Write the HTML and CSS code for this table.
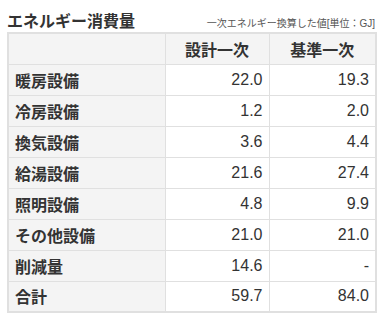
FILE: index.html
```html
<!DOCTYPE html>
<html lang="ja">
<head>
<meta charset="utf-8">
<link rel="stylesheet" href="styles.css">
</head>
<body>
<div class="panel">
  <div class="head">
    <h2 class="title">エネルギー消費量</h2>
    <span class="note">一次エネルギー換算した値[単位：GJ]</span>
  </div>
  <table class="energy">
    <colgroup><col class="c1"><col class="c2"><col class="c3"></colgroup>
    <thead>
      <tr><th></th><th>設計一次</th><th>基準一次</th></tr>
    </thead>
    <tbody>
      <tr><th>暖房設備</th><td>22.0</td><td>19.3</td></tr>
      <tr><th>冷房設備</th><td>1.2</td><td>2.0</td></tr>
      <tr><th>換気設備</th><td>3.6</td><td>4.4</td></tr>
      <tr><th>給湯設備</th><td>21.6</td><td>27.4</td></tr>
      <tr><th>照明設備</th><td>4.8</td><td>9.9</td></tr>
      <tr><th>その他設備</th><td>21.0</td><td>21.0</td></tr>
      <tr><th>削減量</th><td>14.6</td><td>-</td></tr>
      <tr><th>合計</th><td>59.7</td><td>84.0</td></tr>
    </tbody>
  </table>
</div>
</body>
</html>
```
FILE: styles.css
```css
html, body {
  margin: 0;
  padding: 0;
  background: #fff;
}
body {
  font-family: "Liberation Sans", Arial, "Noto Sans CJK JP", sans-serif;
  color: #333;
}
.panel {
  padding: 9px 8px 0 7px;
}
.head {
  display: flex;
  justify-content: space-between;
  align-items: baseline;
  height: 23px;
}
.title {
  margin: 0;
  font-size: 16px;
  font-weight: bold;
  line-height: 22px;
  color: #333;
  font-family: "Noto Sans CJK JP", sans-serif;
}
.note {
  font-size: 10px;
  color: #555;
  line-height: 14px;
  font-family: "Liberation Sans", "Noto Sans CJK JP", sans-serif;
}
.energy {
  width: 368px;
  border-collapse: collapse;
  border: 2px solid #e0e0e0;
  table-layout: fixed;
}
.c1 { width: 157px; }
.c2 { width: 104px; }
.c3 { width: 107px; }
.energy th, .energy td {
  border: 1px solid #e0e0e0;
  height: 31px;
  padding: 0 6px;
  box-sizing: border-box;
  font-size: 16px;
  line-height: 20px;
}
.energy thead th {
  background: #f4f4f4;
  text-align: center;
  font-weight: bold;
  font-family: "Noto Sans CJK JP", sans-serif;
}
.energy tbody th {
  background: #f4f4f4;
  text-align: left;
  font-weight: bold;
  padding-left: 6px;
  font-family: "Noto Sans CJK JP", sans-serif;
}
.energy td {
  text-align: right;
  background: #fff;
}
```
